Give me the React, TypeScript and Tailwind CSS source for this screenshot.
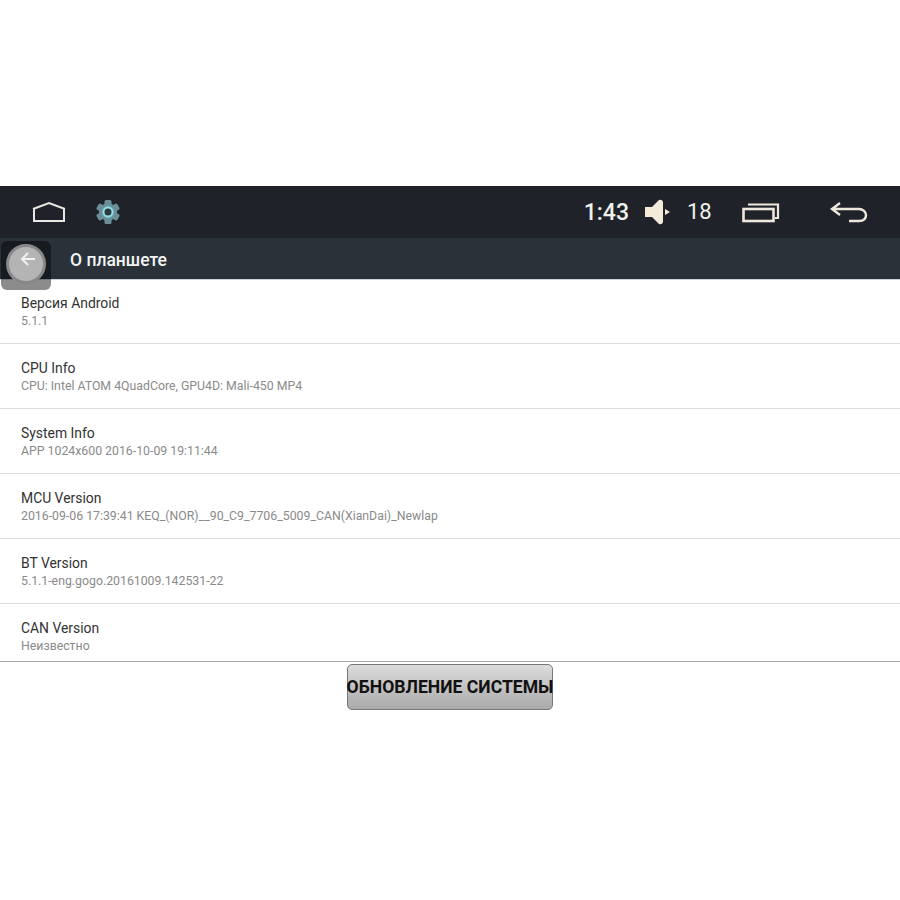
const rows = [
  ["Версия Android", "5.1.1"],
  ["CPU Info", "CPU: Intel ATOM 4QuadCore, GPU4D: Mali-450 MP4"],
  ["System Info", "APP 1024x600 2016-10-09 19:11:44"],
  ["MCU Version", "2016-09-06 17:39:41 KEQ_(NOR)__90_C9_7706_5009_CAN(XianDai)_Newlap"],
  ["BT Version", "5.1.1-eng.gogo.20161009.142531-22"],
];

function Gear() {
  return (
    <svg width="26" height="26" viewBox="0 0 26 26">
      <g fill="#6a8f98">
        <circle cx="13" cy="13" r="9" />
        {[0, 60, 120, 180, 240, 300].map((a) => (
          <rect key={a} x="9.5" y="1" width="7" height="6" rx="1.5" transform={`rotate(${a} 13 13)`} />
        ))}
      </g>
      <circle cx="13" cy="13" r="4.6" fill="#2c3a42" stroke="#8fdde3" strokeWidth="2.2" />
    </svg>
  );
}

export default function App() {
  return (
    <div className="relative w-[900px] h-[900px] bg-white overflow-hidden font-['Roboto','Liberation_Sans',sans-serif]">
      <div className="h-[186px]" />
      <div className="h-[52px] bg-[#1f2329] flex items-center text-[#f0f0ec]">
        <svg className="ml-[32px]" width="34" height="22" viewBox="0 0 34 22" fill="none" stroke="#e8e8e2" strokeWidth="2">
          <path d="M1 8 L17 2 L33 8 M2 8 V20 H32 V8" />
        </svg>
        <div className="ml-[29px] w-[26px] h-[26px]"><Gear /></div>
        <span className="ml-auto text-[23px] font-medium leading-none">1:43</span>
        <svg className="ml-[15px]" width="27" height="26" viewBox="0 0 27 26" fill="#f3ead9">
          <path d="M1 8 H9 V18 H1 Z" />
          <path d="M8 8 L15 1 Q18 0 19 3 V23 Q18 26 15 25 L8 18 Z" />
          <path d="M21 10 L26 13 L21 16 Z" />
        </svg>
        <span className="ml-[16px] text-[22px] leading-none w-[24px]">18</span>
        <svg className="ml-[31px]" width="38" height="22" viewBox="0 0 38 22" fill="none" stroke="#eee8dc" strokeWidth="2.2">
          <rect x="1.5" y="8" width="30" height="12" strokeWidth="2.6" />
          <path d="M6 3.5 H36 V17 H33" />
        </svg>
        <svg className="ml-[50px] mr-[32px]" width="38" height="22" viewBox="0 0 38 22" fill="none" stroke="#eee8dc" strokeWidth="2.4">
          <path d="M10 2 L2 8 L10 14 M2 8 H29 C33 8 36 11 36 14 C36 18 33 20 29 20 H19" />
        </svg>
      </div>
      <div className="h-[42px] bg-[#2a3139] flex items-center pl-[70px] pt-[4px] border-b border-[#c9d3da]">
        <span className="text-[#f2f4f4] text-[17.5px] font-medium">О планшете</span>
      </div>
      <div className="flex flex-col">
        {rows.map(([title, sub], i) => (
          <div key={title} className={`pl-[21px] border-b border-[#dedede] flex flex-col ${i === 0 ? "h-[64px] pt-[14px]" : "h-[65px] pt-[15px]"}`}>
            <span className="text-[13.9px] leading-[18px] text-[#333]">{title}</span>
            <span className="text-[12.3px] leading-[18px] text-[#8a8a8a]">{sub}</span>
          </div>
        ))}
        <div className="pl-[21px] pt-[15px] h-[58px] border-b border-[#a8a8a8] flex flex-col">
          <span className="text-[13.9px] leading-[18px] text-[#333]">CAN Version</span>
          <span className="text-[12.3px] leading-[18px] text-[#8a8a8a]">Неизвестно</span>
        </div>
      </div>
      <div className="flex justify-center mt-[2px]">
        <button className="w-[206px] h-[46px] rounded-[5px] border border-[#777] bg-gradient-to-b from-[#dcdcdc] to-[#aaaaaa] text-[17.6px] font-bold text-[#111] whitespace-nowrap flex items-center justify-center">
          ОБНОВЛЕНИЕ СИСТЕМЫ
        </button>
      </div>
      <div className="absolute left-[1px] top-[241px] w-[50px] h-[49px] rounded-[6px] bg-black/45 flex items-center justify-center pb-[3px]">
        <div className="w-[40px] h-[40px] rounded-full bg-[#b4b4b4] border-[3px] border-[#888] flex items-center justify-center">
          <svg width="18" height="16" viewBox="0 0 18 16" fill="none" stroke="#f2f2f2" strokeWidth="2" className="-mt-[10px] ml-[4px]">
            <path d="M9 2 L3 8 L9 14 M3 8 H16" />
          </svg>
        </div>
      </div>
    </div>
  );
}
